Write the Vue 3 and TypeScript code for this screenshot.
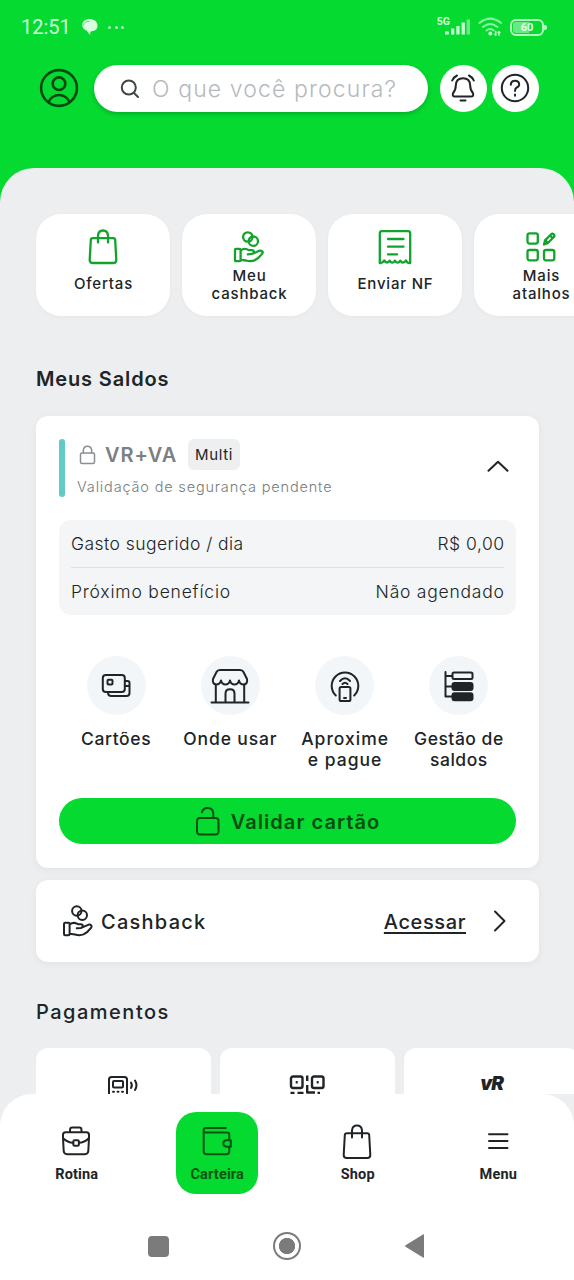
<script setup lang="ts">
interface Item {
  icon: string
  lines: string[]
  cls: string
}

const shortcuts: Item[] = [
  { icon: 'bag', lines: ['Ofertas'], cls: 'one' },
  { icon: 'cashback', lines: ['Meu', 'cashback'], cls: 'two' },
  { icon: 'receipt', lines: ['Enviar NF'], cls: 'one' },
  { icon: 'more', lines: ['Mais', 'atalhos'], cls: 'two' },
]

const actions: Item[] = [
  { icon: 'cards', lines: ['Cartões'], cls: 'cartoes' },
  { icon: 'store', lines: ['Onde usar'], cls: 'onde' },
  { icon: 'tap', lines: ['Aproxime', 'e pague'], cls: 'aproxime' },
  { icon: 'tree', lines: ['Gestão de', 'saldos'], cls: 'gestao' },
]

const tabs = [
  { icon: 'briefcase', label: 'Rotina', active: false },
  { icon: 'wallet', label: 'Carteira', active: true },
  { icon: 'bag', label: 'Shop', active: false },
  { icon: 'menu', label: 'Menu', active: false },
]

const payments = ['terminal', 'qr', 'vr']
</script>

<template>
  <div class="screen">
    <svg class="sprite" aria-hidden="true">
      <symbol id="bag" viewBox="0 0 36 36">
        <path d="M7.7 9.2H28.3Q30 9.2 30.2 11L31.3 31Q31.3 34 28.3 34H7.7Q4.7 34 4.7 31L5.8 11Q6 9.2 7.7 9.2ZM13 13.5V6.5Q13.4 1.5 18 1.5T23 6.5V13.5" />
      </symbol>
      <symbol id="cashback" viewBox="0 0 32 34">
        <circle cx="14.8" cy="7" r="4.7" />
        <circle cx="20.3" cy="11.2" r="4.7" />
        <path d="M3 18.8H6.4Q7.6 18.8 7.6 20V30Q7.6 31.2 6.4 31.2H3Q2 31.2 2 30V20Q2 18.8 3 18.8ZM7.6 20.4C11.5 17.6 14 18.9 16 20.2H18.6C21.6 20.4 21.6 23.4 18.8 23.9L14.8 24.3M20.9 23.2L26.2 20.8C28.5 20 30.6 21.6 29.2 23.6C26.5 27.3 24.6 29 21.5 30.4C18.5 31.6 16 31.3 13 30.5L7.6 29.8" />
      </symbol>
      <symbol id="receipt" viewBox="0 0 36 36">
        <path d="M2.8 34V4.5Q2.8 2.2 5 2.2H31Q33.2 2.2 33.2 4.5V34Q30.5 34.5 29 31.4Q26 35.7 23.3 31.6Q20.6 35.8 18 31.6Q15.2 35.8 12.7 31.6Q10 35.5 7.3 31.4Q5.5 34.5 2.8 34ZM11 10H26.5M11 17.7H26.5M11 25.4H20" />
      </symbol>
      <symbol id="more" viewBox="0 0 32 32">
        <rect x="2.5" y="2.3" width="10.3" height="10.3" rx="2" />
        <rect x="2.5" y="19" width="10.3" height="10.3" rx="2" />
        <rect x="19" y="19" width="10.3" height="10.3" rx="2" />
        <path d="M19 13.5L20 9.4L26.2 3.2Q27.5 2.2 28.8 3.3Q30 4.6 28.8 6L22.7 12.2ZM21 10L22.5 11.7M25.2 4.5L27.5 7" />
      </symbol>
      <symbol id="cards" viewBox="0 0 32 32">
        <rect x="2.8" y="5" width="22" height="17" rx="3" />
        <rect x="7.5" y="9.8" width="5" height="4.7" rx="1" />
        <path d="M25 11H27.5Q29.5 11 29.5 13V23Q29.5 26 26.5 26H11.5Q8 26 8 22.5M25 16H29" />
      </symbol>
      <symbol id="store" viewBox="0 0 40 36">
        <path d="M10 2H30Q32.5 2 33.5 4L37 11Q38 16 33.7 16.5Q29.8 16.5 29 12.5Q28 16.5 24.5 16.5T20 12.5Q19 16.5 15.5 16.5T11 12.5Q10 16.5 6.3 16.5Q2 16 3 11L6.5 4Q7.5 2 10 2ZM5.8 17V34.2M34.2 17V34.2M1.5 34.5H38.5M15.5 34V25.7Q15.5 21.3 20 21.3T24.5 25.7V34" />
      </symbol>
      <symbol id="tap" viewBox="0 0 32 34">
        <path d="M6.8 26.5A13.3 13.3 0 1 1 25.2 26.5M11 12Q16 6.7 21 12M13.5 15Q16 12.5 18.5 15" />
        <rect x="10.6" y="18" width="10.8" height="14" rx="1.6" />
        <path d="M15 29H17" />
      </symbol>
      <symbol id="tree" viewBox="0 0 32 32">
        <path d="M2.5 2V26.5H9M2.5 6H9M2.5 16.5H9" />
        <rect x="9.5" y="2.5" width="20" height="6.5" rx="1.5" />
        <rect class="solid" x="9.5" y="13" width="20" height="7" rx="2" />
        <rect class="solid" x="9.5" y="23.2" width="20" height="7" rx="2" />
      </symbol>
      <symbol id="briefcase" viewBox="0 0 32 32">
        <path d="M5.5 7.3H26.5Q29 7.3 29 9.8V13L28.3 26Q28 29.2 25 29.2H7Q4 29.2 3.7 26L3 13V9.8Q3 7.3 5.5 7.3ZM10 7V5Q10 2.6 12.2 2.6H19.3Q21.5 2.6 21.5 5V7M3 13Q7.5 17.8 13.3 17.8M18.8 17.8Q24.5 17.8 29 13" />
        <rect x="13.3" y="15.2" width="5.6" height="5.6" rx="1.4" />
      </symbol>
      <symbol id="wallet" viewBox="0 0 32 32">
        <path d="M24.8 3H4.7Q2.7 3 2.7 5.2T4.7 7.5H26Q28.3 7.5 28.3 9.7V15M2.7 5V26.2Q2.7 29.2 5.7 29.2H25.3Q28.3 29.2 28.3 26.2V21.5M29.8 15.3H25.7Q22.3 15.5 22.3 18.4T25.7 21.7H29.8Z" />
      </symbol>
      <symbol id="menu" viewBox="0 0 32 32">
        <path d="M7 8.3H25.5M7 15.1H25.5M7 21.9H25.5" />
      </symbol>
    </svg>

    <header class="top">
      <div class="status">
        <span class="time">12:51</span>
        <svg class="bubble" viewBox="0 0 18 18">
          <path d="M8.5 1C13 1 16.5 3.5 16.5 7.8C16.5 11.5 13.5 13.3 9.5 13.5L9 17L5.8 12.7C3 11.7 1.3 10 1.3 7C1.3 3.3 4.5 1 8.5 1Z" />
          <path class="curl" d="M2.5 7.5Q3 3 8 3.5" />
        </svg>
        <span class="dots"><i></i><i></i><i></i></span>
        <span class="network">5G</span>
        <svg class="signal" viewBox="0 0 26 16">
          <path d="M0 12.5H3.8V15.5H0ZM6 9.5H9.3V15.5H6ZM11.3 7H14.6V15.5H11.3ZM16.6 3.5H19.9V15.5H16.6Z" />
          <path class="weak" d="M21.6 .5H25V15.5H21.6Z" />
        </svg>
        <svg class="wifi" viewBox="0 0 25 20">
          <path d="M1.5 6Q12 -2.8 23 6M5 10Q12 4 19.5 10M8.5 13.5Q12 10.5 15.8 13.5" />
          <circle cx="12.3" cy="16.5" r="1.9" />
          <path class="arrows" d="M17.8 14.5V18.3M21 14.5V18.3M16.8 17.3L17.8 18.3M20 15.5L21 14.5L22 15.5" />
        </svg>
        <span class="battery"><b>60</b></span>
      </div>
      <div class="bar">
        <svg class="avatar" viewBox="0 0 40 40">
          <circle cx="20" cy="20" r="17.9" />
          <circle cx="20" cy="15.7" r="6.3" />
          <path d="M9.5 34Q13 27 20 27T30.5 34" />
        </svg>
        <div class="search">
          <svg viewBox="0 0 20 20"><circle cx="8.8" cy="8.5" r="7" /><path d="M14 14L18 18" /></svg>
          <span>O que você procura?</span>
        </div>
        <div class="round bell">
          <svg viewBox="0 0 30 30">
            <path d="M15 5.2Q8 5.2 7.8 12.5Q7.8 17.2 5 20.2Q4 23.5 7 23.5H23Q26 23.5 25 20.2Q22.2 17.2 22.2 12.5Q22 5.2 15 5.2ZM12.5 27.5H17.5M4.2 7.5Q5.5 4.2 9 2.5M25.8 7.5Q24.5 4.2 21 2.5" />
          </svg>
        </div>
        <div class="round">
          <svg viewBox="0 0 30 30">
            <circle cx="15" cy="15" r="13.2" />
            <path d="M10.8 11.7Q11 7.8 15 7.8T19.2 11.5Q19.2 13.5 16.7 14.5Q15 15.3 15 18M15 21.5V22.8" />
          </svg>
        </div>
      </div>
    </header>

    <main class="panel">
      <div class="shortcuts">
        <div v-for="s in shortcuts" :key="s.icon" class="shortcut" :class="s.cls">
          <svg><use :href="'#' + s.icon" /></svg>
          <p><span v-for="l in s.lines" :key="l">{{ l }}</span></p>
        </div>
      </div>

      <h2 class="saldos">Meus Saldos</h2>

      <section class="card balance">
        <div class="account">
          <div class="stripe"></div>
          <div class="account-info">
            <div class="title">
              <svg viewBox="0 0 18 20">
                <rect x="1.5" y="8" width="14" height="10.6" rx="1.5" />
                <path d="M4.3 8V5.5Q4.6 1.2 8.5 1.2T12.7 5.5V8" />
              </svg>
              <strong>VR+VA</strong>
              <span class="chip">Multi</span>
            </div>
            <p>Validação de segurança pendente</p>
          </div>
          <svg class="chevron" viewBox="0 0 22 12"><path d="M1.5 10.8L11 1.8L20.5 10.8" /></svg>
        </div>

        <dl class="summary">
          <div><dt class="gasto">Gasto sugerido / dia</dt><dd class="valor">R$ 0,00</dd></div>
          <div><dt class="proximo">Próximo benefício</dt><dd class="nao">Não agendado</dd></div>
        </dl>

        <div class="actions">
          <div v-for="a in actions" :key="a.icon" class="action" :class="a.cls">
            <div class="disc"><svg :class="a.icon"><use :href="'#' + a.icon" /></svg></div>
            <p><span v-for="l in a.lines" :key="l">{{ l }}</span></p>
          </div>
        </div>

        <button class="validate">
          <svg viewBox="0 0 26 30">
            <rect x="2" y="12" width="21.5" height="16.5" rx="3" />
            <path d="M7 6.3Q8 2 12.5 2Q18.3 2 18.3 8V12" />
          </svg>
          <span>Validar cartão</span>
        </button>
      </section>

      <section class="card cashback">
        <svg class="hand"><use href="#cashback" /></svg>
        <strong>Cashback</strong>
        <a>Acessar</a>
        <svg class="next" viewBox="0 0 14 22"><path d="M2 1.5L11.5 11L2 20.5" /></svg>
      </section>

      <h2 class="pagamentos">Pagamentos</h2>

      <div class="payments">
        <div v-for="p in payments" :key="p" class="payment">
          <svg v-if="p === 'terminal'" class="terminal" viewBox="0 0 34 22">
            <path d="M3 22V4.5Q3 2 5.5 2H18.5Q21 2 21 4.5V22" />
            <rect x="7" y="6" width="10" height="6.5" rx="1" />
            <path d="M7 16.8H8M11.5 16.8H12.5M16 16.8H17M25 7.5Q26.7 10.3 25 13M29 5.5Q32 10.3 29 15" />
          </svg>
          <svg v-else-if="p === 'qr'" class="qr" viewBox="0 0 36 22">
            <rect x="2" y="2.5" width="11.5" height="11.5" rx="2" />
            <rect x="23" y="2.5" width="11.5" height="11.5" rx="2" />
            <path d="M6.7 8.2H8.7M27.7 8.2H29.7M18.2 1.5V7M18.2 11V18.5H26M1.5 19H5.5M8.5 19H14.5M28.5 19H31" />
          </svg>
          <span v-else class="vr">vR</span>
        </div>
      </div>
    </main>

    <footer class="dock">
      <nav>
        <div v-for="t in tabs" :key="t.label" class="tab" :class="[t.icon, { active: t.active }]">
          <svg><use :href="'#' + t.icon" /></svg>
          <span>{{ t.label }}</span>
        </div>
      </nav>
      <div class="system">
        <i class="recent"></i>
        <i class="home"></i>
        <svg viewBox="0 0 22 26"><path d="M20 1.8V24.2Q20 25 19 24.5L1.5 13.8Q.5 13 1.5 12.2L19 1.5Q20 1 20 1.8Z" /></svg>
      </div>
    </footer>
  </div>
</template>

<style>
body {
  background: #05da30;
}
</style>

<style scoped>
* {
  box-sizing: border-box;
  margin: 0;
  padding: 0;
}
.screen {
  width: 574px;
  height: 1280px;
  overflow: hidden;
  display: flex;
  flex-direction: column;
  background: #05da30;
  color: #202427;
  font-family: Inter, "Open Sans", sans-serif;
}
svg {
  display: block;
  flex: none;
  fill: none;
  stroke: currentColor;
  stroke-width: 2;
  stroke-linecap: round;
  stroke-linejoin: round;
}
.sprite {
  width: 0;
  height: 0;
}
.solid {
  fill: currentColor;
}
span,
strong,
dt,
dd,
a {
  white-space: nowrap;
}

.top {
  height: 168px;
  flex: none;
}
.status {
  display: flex;
  align-items: center;
  height: 54px;
  padding: 0 27px 0 21px;
  color: #d4ffdc;
}
.time {
  font: 400 20px Roboto, sans-serif;
  letter-spacing: 0;
  width: 60px;
}
.bubble {
  width: 18px;
  height: 18px;
  fill: #d9ffe0;
  stroke: none;
}
.bubble .curl {
  fill: none;
  stroke: #5fe77b;
  stroke-width: 1;
}
.dots {
  display: flex;
  gap: 3.5px;
  margin-left: 9px;
}
.dots i {
  width: 3px;
  height: 3px;
  border-radius: 50%;
  background: #a8f7b8;
}
.network {
  margin: -11px 0 0 auto;
  font: 700 10.5px Roboto, sans-serif;
}
.signal {
  width: 26px;
  height: 16px;
  margin-left: -5px;
  fill: #c8ffd2;
  stroke: none;
}
.signal .weak {
  fill: #6cea85;
}
.wifi {
  width: 25px;
  height: 20px;
  margin-left: 7px;
  color: #8df2a2;
}
.wifi circle {
  fill: #d4ffdc;
  stroke: none;
}
.wifi .arrows {
  stroke: #d4ffdc;
  stroke-width: 1.3;
}
.battery {
  position: relative;
  width: 34px;
  height: 17px;
  margin: 0 3px 0 7px;
  border: 2px solid #b4f9c2;
  border-radius: 6px;
  display: flex;
  align-items: center;
  justify-content: center;
  background: linear-gradient(90deg, #69e982 58%, transparent 58%) content-box;
  padding: 1px;
}
.battery::after {
  content: "";
  position: absolute;
  right: -5px;
  top: 4px;
  width: 3px;
  height: 5px;
  background: #b4f9c2;
  border-radius: 0 2px 2px 0;
}
.battery b {
  font: 700 11px Roboto, sans-serif;
  color: #e3ffe8;
}
.bar {
  display: flex;
  align-items: center;
  padding-left: 39px;
  margin-top: 11px;
}
.avatar {
  width: 40px;
  height: 40px;
  margin-top: -1px;
  color: #06470f;
  stroke-width: 2.6;
}
.search {
  display: flex;
  align-items: center;
  width: 334px;
  height: 47px;
  margin-left: 15px;
  padding-left: 26px;
  border-radius: 24px;
  background: #fff;
  box-shadow: 0 2px 4px rgba(0, 60, 10, 0.28);
}
.search svg {
  width: 20px;
  height: 20px;
  color: #414548;
}
.search span {
  margin: 1px 0 0 12px;
  font-size: 23px;
  font-weight: 300;
  letter-spacing: 1.12px;
  color: #b5babe;
}
.round {
  display: grid;
  place-items: center;
  width: 47px;
  height: 47px;
  margin-left: 5px;
  border-radius: 50%;
  background: #fff;
}
.round.bell {
  margin-left: 12px;
}
.round svg {
  width: 30px;
  height: 30px;
  margin: -1px 0 0 -1px;
}

.panel {
  height: 926px;
  flex: none;
  overflow: hidden;
  padding: 46px 35px 0 36px;
  border-radius: 34px 34px 0 0;
  background: #eceef0;
}
.shortcuts {
  display: flex;
  gap: 12px;
  height: 102px;
}
.shortcut {
  flex: 0 0 134px;
  display: flex;
  flex-direction: column;
  align-items: center;
  border-radius: 25px;
  background: #fff;
  box-shadow: 0 1px 4px rgba(0, 0, 0, 0.03);
}
.shortcut svg {
  color: #13a32c;
  stroke-width: 2.3;
}
.shortcut.one svg {
  width: 36px;
  height: 36px;
  margin-top: 15px;
}
.shortcut.two svg {
  width: 32px;
  height: 34px;
  margin-top: 16px;
}
.shortcut p {
  margin-top: 10px;
  padding-left: 1px;
  font-size: 15px;
  font-weight: 500;
  line-height: 18px;
  letter-spacing: 0.8px;
}
.shortcut.two p {
  margin-top: 3px;
}
p span {
  display: block;
  text-align: center;
}
h2 {
  font-size: 20px;
  font-weight: 600;
  line-height: 24px;
  letter-spacing: 0.86px;
}
.saldos {
  margin-top: 51px;
}
.card {
  border-radius: 12px;
  background: #fff;
  box-shadow: 0 2px 8px rgba(0, 0, 0, 0.05);
}
.balance {
  height: 452px;
  margin-top: 25px;
  padding: 23px;
}
.account {
  display: flex;
  height: 58px;
}
.stripe {
  width: 6px;
  border-radius: 3px;
  background: #62cbc6;
}
.account-info {
  margin-left: 12px;
}
.title {
  display: flex;
  align-items: center;
  height: 31px;
  padding-left: 2px;
}
.title svg {
  width: 18px;
  height: 20px;
  color: #8b8f91;
  stroke-width: 1.5;
}
.title strong {
  width: 83px;
  margin-left: 8px;
  padding-top: 1px;
  font-size: 20px;
  font-weight: 600;
  letter-spacing: 0.9px;
  color: #7c8082;
}
.chip {
  display: grid;
  place-items: center;
  width: 52px;
  height: 31px;
  border-radius: 6px;
  background: #edeff1;
  font-size: 15px;
  letter-spacing: 0.6px;
}
.account-info p {
  margin-top: 8px;
  font-size: 14.5px;
  line-height: 18px;
  font-weight: 300;
  letter-spacing: 0.83px;
  color: #777c7e;
}
.chevron {
  width: 22px;
  height: 12px;
  margin: 21px 7px 0 auto;
}
.summary {
  margin-top: 23px;
  height: 95px;
  padding: 0 12px;
  border-radius: 12px;
  background: #f3f5f7;
}
.summary div {
  display: flex;
  align-items: center;
  justify-content: space-between;
  height: 47px;
  font-size: 17.5px;
  font-weight: 350;
}
.summary div + div {
  height: 48px;
  border-top: 1px solid #dee1e4;
}
.gasto {
  letter-spacing: 0.45px;
}
.proximo {
  letter-spacing: 0.8px;
}
.valor {
  margin-right: -0.5px;
  letter-spacing: 0.5px;
}
.nao {
  margin-right: -0.7px;
  letter-spacing: 0.77px;
}
.actions {
  display: grid;
  grid-template-columns: repeat(4, 1fr);
  height: 142px;
  margin-top: 41px;
}
.action {
  display: flex;
  flex-direction: column;
  align-items: center;
}
.disc {
  display: grid;
  place-items: center;
  width: 59px;
  height: 59px;
  border-radius: 50%;
  background: #f3f6f8;
}
.disc svg {
  width: 32px;
  height: 32px;
}
.disc svg.store {
  width: 40px;
  height: 36px;
}
.disc svg.tap {
  height: 34px;
}
.action p {
  margin-top: 13px;
  font-size: 17.5px;
  line-height: 21px;
  font-weight: 500;
  letter-spacing: 0.6px;
}
.action.onde p {
  letter-spacing: 0.85px;
}
.action.aproxime p {
  padding-left: 1px;
  letter-spacing: 1px;
}
.action.gestao p {
  letter-spacing: 0.5px;
}
.validate {
  display: flex;
  align-items: center;
  justify-content: center;
  width: 100%;
  height: 46px;
  padding-top: 2px;
  border: 0;
  border-radius: 23px;
  background: #05da30;
  color: #074d11;
  font: 600 20px Inter, sans-serif;
}
.validate svg {
  width: 26px;
  height: 30px;
  margin-top: -2px;
}
.validate span {
  margin-left: 10px;
  letter-spacing: 1.05px;
}
.cashback {
  display: flex;
  align-items: center;
  height: 82px;
  margin-top: 12px;
  padding: 0 32px 0 26px;
  font-size: 20px;
}
.hand {
  width: 32px;
  height: 34px;
  margin-top: -1px;
}
.cashback strong {
  margin: 2px 0 0 7px;
  font-weight: 500;
  letter-spacing: 1.25px;
}
.cashback a {
  margin: 2px 0 0 auto;
  font-weight: 500;
  letter-spacing: 0.6px;
  text-decoration: underline;
  text-underline-offset: 3px;
  text-decoration-thickness: 1.5px;
}
.next {
  width: 14px;
  height: 22px;
  margin-left: 27px;
}
.pagamentos {
  margin-top: 38px;
  font-weight: 550;
  letter-spacing: 1.5px;
}
.payments {
  display: flex;
  gap: 9px;
  margin-top: 24px;
}
.payment {
  flex: 0 0 175px;
  height: 80px;
  display: flex;
  justify-content: center;
  padding-top: 26px;
  border-radius: 12px;
  background: #fff;
}
.terminal {
  width: 34px;
  height: 22px;
  margin: 1px 0 0 -1px;
}
.qr {
  width: 36px;
  height: 22px;
  margin-left: -2px;
  stroke-width: 2.4;
  stroke-linecap: butt;
}
.vr {
  font: italic 900 19px/20px Inter, sans-serif;
  letter-spacing: -1px;
}

.dock {
  flex: 1;
  background: #eceef0;
}
nav {
  display: grid;
  grid-template-columns: repeat(4, 140.5px);
  justify-content: center;
  justify-items: center;
  height: 118px;
  padding-top: 18px;
  border-radius: 32px 32px 0 0;
  background: #fff;
}
.tab {
  display: flex;
  flex-direction: column;
  align-items: center;
  width: 82px;
  height: 82px;
  padding-top: 12px;
  border-radius: 20px;
  font: 700 14.5px/18px Roboto, sans-serif;
  letter-spacing: 0.15px;
}
.tab svg {
  width: 32px;
  height: 34px;
}
.tab.bag svg {
  width: 36px;
  height: 36px;
  margin-bottom: -2px;
}
.tab.menu svg {
  margin: 1px 0 -1px;
}
.tab span {
  margin-top: 8px;
  padding-left: 1px;
}
.tab.active {
  background: #05da30;
  color: #075512;
}
.system {
  display: flex;
  align-items: center;
  height: 68px;
  padding-left: 148px;
  background: #fff;
  color: #7b7b7b;
}
.recent {
  width: 21px;
  height: 21px;
  border-radius: 4px;
  background: currentColor;
}
.home {
  width: 28px;
  height: 28px;
  margin-left: 104px;
  border: 2px solid currentColor;
  border-radius: 50%;
  background: radial-gradient(circle, currentColor 7.8px, #fff 8.4px);
}
.system svg {
  width: 22px;
  height: 26px;
  margin-left: 103px;
  fill: currentColor;
  stroke: none;
}
</style>
